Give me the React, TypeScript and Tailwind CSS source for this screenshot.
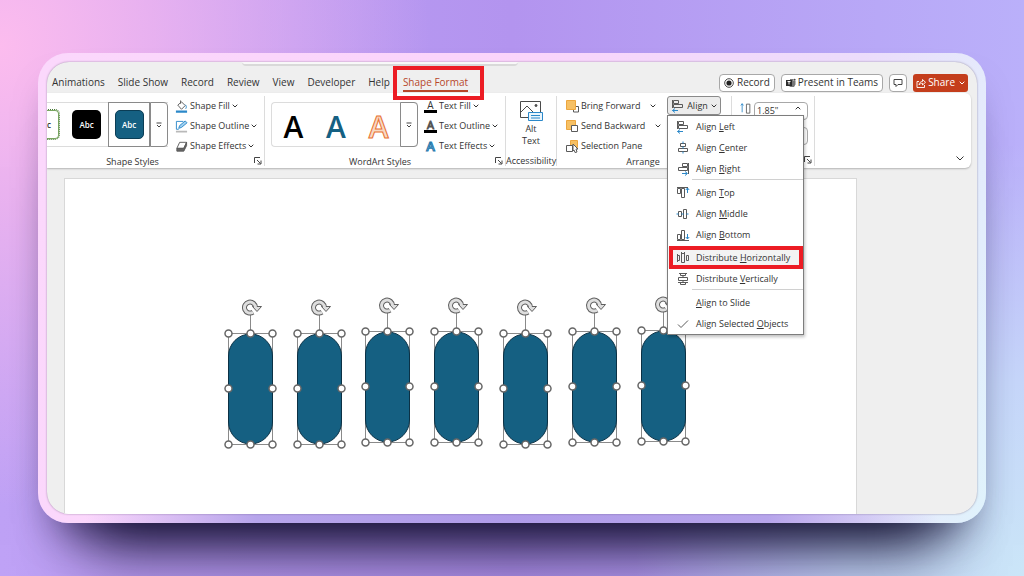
import type { ReactNode } from "react";
import clsx from "clsx";

const tabs = ["Animations", "Slide Show", "Record", "Review", "View", "Developer", "Help"];

// position of each selected shape on the slide
const shapes = [
	{ left: 164, top: 155 },
	{ left: 233, top: 155 },
	{ left: 301, top: 153 },
	{ left: 370, top: 153 },
	{ left: 439, top: 155 },
	{ left: 508, top: 153 },
	{ left: 577, top: 152 },
];

function Icon({ children, className }: { children: ReactNode; className?: string }) {
	return (
		<svg
			viewBox="0 0 14 14"
			className={clsx("shrink-0", className ?? "size-[14px]")}
			fill="none"
			stroke="#5a5a5a"
			aria-hidden="true"
		>
			{children}
		</svg>
	);
}

function Chevron({ className }: { className?: string }) {
	return (
		<svg viewBox="0 0 6 4" className={clsx("h-1 w-[6px] shrink-0", className)} fill="none" stroke="currentColor" aria-hidden="true">
			<path d="M.7.7 3 3 5.3.7" />
		</svg>
	);
}

function Launcher({ label }: { label: string }) {
	return (
		<button aria-label={label} className="ml-auto">
			<svg viewBox="0 0 8 8" className="size-2" fill="none" stroke="#444" aria-hidden="true">
				<path d="M.5 6V.5H6M3 3l3.5 3.5M7 3.5V7H3.5" />
			</svg>
		</button>
	);
}

function GalleryMore({ label }: { label: string }) {
	return (
		<button aria-label={label} className="flex w-[18px] items-center justify-center rounded-r border border-[#8a8a8a] text-[#444]">
			<svg viewBox="0 0 6 6" className="size-[6px]" fill="none" stroke="currentColor" aria-hidden="true">
				<path d="M.5 1h5M1 3l2 2 2-2" />
			</svg>
		</button>
	);
}

function Command({ icon, label, menu = true, spread }: { icon: ReactNode; label: string; menu?: boolean; spread?: boolean }) {
	return (
		<button className="flex h-5 items-center gap-[2px] whitespace-nowrap">
			{icon}
			<span>{label}</span>
			{menu && <Chevron className={spread ? "ml-2" : undefined} />}
		</button>
	);
}

const alignIcons = {
	left: (
		<Icon>
			<path d="M1.5 1v8M2.5 1.5h5v3h-5zM2.5 5.5h9v3h-9z" />
			<path d="M7 11.5H1.5M4 9.5l-2.5 2 2.5 2" stroke="#2b88c9" />
		</Icon>
	),
	center: (
		<Icon>
			<path d="M4.5 2.5h5v3h-5zM2.5 7.5h9v3h-9z" />
			<path d="M7 .5v2M7 5.5v2M7 10.5v2" stroke="#2b88c9" />
		</Icon>
	),
	right: (
		<Icon>
			<path d="M12.5 1v11M6.5 1.5h5v3h-5zM2.5 5.5h9v3h-9z" />
			<path d="M6 11.5h5M9 9.5l2.5 2-2.5 2" stroke="#2b88c9" />
		</Icon>
	),
	top: (
		<Icon>
			<path d="M1 1.5h11M1.5 2.5h3v5h-3zM5.5 2.5h3v9h-3z" />
			<path d="M11.5 7V2M9.8 4l1.7-2 1.7 2" stroke="#2b88c9" />
		</Icon>
	),
	middle: (
		<Icon>
			<path d="M2.5 4.5h3v5h-3zM7.5 2.5h3v9h-3z" />
			<path d="M.5 7h2M5.5 7h2M10.5 7h2" stroke="#2b88c9" />
		</Icon>
	),
	bottom: (
		<Icon>
			<path d="M1 12.5h12M1.5 6.5h3v5h-3zM5.5 2.5h3v9h-3z" />
			<path d="M11.5 6v5M9.8 9l1.7 2 1.7-2" stroke="#2b88c9" />
		</Icon>
	),
	horizontal: (
		<Icon>
			<path d="M1.5 3v8M1.5 4.5h2v5h-2M5.5 2.5h3v9h-3zM10.5 4.5h2v5h-2zM5.5 1v2M8.5 1v2" />
		</Icon>
	),
	vertical: (
		<Icon>
			<path d="M4.5 1.5h5v2h-5zM2.5 5.500h9v3h-9zM4.500 10.500h5v2h-5zM7 3.500v2M7 8.500v2M3 1.500h8M2 10.500h10" />
		</Icon>
	),
	check: (
		<Icon>
			<path d="m2 7.5 3 3 7-7" />
		</Icon>
	),
};

// `letter` is the access key, underlined inside the label
function MenuItem({
	icon,
	before = "",
	letter,
	after,
	marked,
}: {
	icon?: ReactNode;
	before?: string;
	letter: string;
	after: string;
	marked?: boolean;
}) {
	return (
		<button
			role="menuitem"
			className={clsx("relative flex h-[21px] w-full items-center pl-2 text-left whitespace-nowrap", marked && "mt-[2px] bg-[#f3f3f3]")}
		>
			<span className="flex w-5 shrink-0">{icon}</span>
			<span>
				{before}
				<span className="underline underline-offset-1">{letter}</span>
				{after}
			</span>
			{marked && <span className="absolute -inset-y-px right-0 left-px border-4 border-[#ec1c24]" />}
		</button>
	);
}

function AlignMenu() {
	return (
		<div
			role="menu"
			className="absolute top-full left-0 z-20 w-[137px] border border-[#7d7d7d] bg-white shadow-[1px_2px_3px_rgba(0,0,0,0.25)]"
		>
			<MenuItem icon={alignIcons.left} before="Align " letter="L" after="eft" />
			<MenuItem icon={alignIcons.center} before="Align " letter="C" after="enter" />
			<MenuItem icon={alignIcons.right} before="Align " letter="R" after="ight" />
			<div className="ml-6 border-t border-[#d0d0d0] pb-[2px]" />
			<MenuItem icon={alignIcons.top} before="Align " letter="T" after="op" />
			<MenuItem icon={alignIcons.middle} before="Align " letter="M" after="iddle" />
			<MenuItem icon={alignIcons.bottom} before="Align " letter="B" after="ottom" />
			<MenuItem icon={alignIcons.horizontal} before="Distribute " letter="H" after="orizontally" marked />
			<MenuItem icon={alignIcons.vertical} before="Distribute " letter="V" after="ertically" />
			<div className="ml-6 border-t border-[#d0d0d0] pb-[2px]" />
			<MenuItem letter="A" after="lign to Slide" />
			<MenuItem icon={alignIcons.check} before="Align Selected " letter="O" after="bjects" />
		</div>
	);
}

function TabBar() {
	return (
		<div className="pb-[2px]">
			<div className="ml-[195px] h-1 w-[276px] rounded-b border-b-2 border-[#d9d9d9] bg-[#f8f8f8]" />
			<div className="flex h-[25px] items-center justify-between pr-[9px] pl-[5px] text-[10px]">
				<nav className="flex items-center gap-[13px] pt-2 whitespace-nowrap">
					{tabs.map((tab) => (
						<button key={tab}>{tab}</button>
					))}
					<button className="relative text-[#b7472a]">
						<span className="block border-b-2 border-[#b7472a] leading-4">Shape Format</span>
						<span className="absolute -inset-y-2 -right-4 -left-[10px] z-10 border-4 border-[#ec1c24]" />
					</button>
				</nav>
				<div className="flex items-center gap-[6px] pt-2 whitespace-nowrap">
					<button className="flex h-[18px] items-center gap-[3px] rounded border border-[#a8a8a8] bg-white px-1">
						<svg viewBox="0 0 10 10" className="size-[10px]" aria-hidden="true">
							<circle cx="5" cy="5" r="4.3" fill="none" stroke="#333" strokeWidth=".9" />
							<circle cx="5" cy="5" r="2.6" fill="#222" />
						</svg>
						Record
					</button>
					<button className="flex h-[18px] items-center gap-[2px] rounded border border-[#a8a8a8] bg-white px-1">
						<svg viewBox="0 0 10 10" className="size-[10px]" aria-hidden="true">
							<path d="M4 1h3.500v2H9.500v3.500L8 9H4.500L3 8V3h1z" fill="#777" />
							<circle cx="8.600" cy="1.800" r="1" fill="#444" />
							<path d="M0 2h6v6H0z" fill="#2d2d2d" />
							<path d="M1.500 3.500h3M3 3.500v3" stroke="#fff" />
						</svg>
						Present in Teams
					</button>
					<button aria-label="Comments" className="flex h-[18px] w-[18px] items-center justify-center rounded border border-[#a8a8a8] bg-white">
						<svg viewBox="0 0 10 10" className="size-[10px]" fill="none" stroke="#444" aria-hidden="true">
							<path d="M1 1.5h8v5H5L3 8.5v-2H1z" />
						</svg>
					</button>
					<button className="flex h-[18px] items-center gap-[2px] rounded-[3px] bg-[#c43e1c] px-[3px] text-white">
						<svg viewBox="0 0 10 10" className="size-[10px]" fill="none" stroke="currentColor" aria-hidden="true">
							<path d="M3 3.500H1v6h7.500V7M3 7c.3-2.200 1.500-3.500 3.500-3.500V1.500l3 2.800-3 2.700V5.300C5 5.300 4 5.800 3 7z" strokeWidth=".9" />
						</svg>
						Share
						<Chevron className="ml-[2px]" />
					</button>
				</div>
			</div>
		</div>
	);
}

function Group({
	name,
	children,
	launcher,
	className,
	labelClass,
}: {
	name: string;
	children: ReactNode;
	launcher?: boolean;
	className?: string;
	labelClass?: string;
}) {
	return (
		<section className={clsx("mt-[3px] mb-[2px] flex shrink-0 flex-col border-r border-[#dcdcdc]", className)}>
			<div className="flex grow">{children}</div>
			<div className="flex h-3 items-center pr-[2px] leading-none">
				<span className={clsx("grow text-center whitespace-nowrap", labelClass)}>{name}</span>
				{launcher && <Launcher label={`${name} options`} />}
			</div>
		</section>
	);
}

function ShapeStyles() {
	return (
		<Group name="Shape Styles" launcher className="w-[218px]" labelClass="pr-9">
			<div className="mt-[6px] flex h-[45px] w-[121px] border-y border-[#dcdcdc] text-[8px] font-semibold">
				<button className="my-[7px] w-3 overflow-hidden rounded-r border border-l-0 border-[#78a560] text-left outline outline-dotted outline-[#4a7a38]">c</button>
				<button className="my-[7px] ml-[13px] h-[29px] w-[29px] rounded-[5px] bg-black text-white">Abc</button>
				<button className="-my-px ml-[7px] flex grow items-center justify-center border border-[#8a8a8a]">
					<span className="flex h-[29px] w-[29px] items-center justify-center rounded-[5px] border border-[#0b3d55] bg-[#156082] text-white">
						Abc
					</span>
				</button>
				<div className="-my-px flex">
					<GalleryMore label="More shape styles" />
				</div>
			</div>
			<div className="ml-[7px] flex flex-col">
				<Command
					label="Shape Fill"
					icon={
						<Icon className="size-[13px]">
							<path d="m3 5.5 4-3.500 4 4-4 4-4-4.500ZM6 4V.5" />
							<path d="M11 5c1.500 1.500 1.500 3 .5 4.500" stroke="#2b88c9" />
							<path d="M1 12.500h12" stroke="#2b88c9" strokeWidth="2.500" />
						</Icon>
					}
				/>
				<Command
					label="Shape Outline"
					icon={
						<Icon className="size-[13px]">
							<path d="M9 1.500H1.500V10H4" stroke="#2b88c9" />
							<path d="m4 9 1-3 6-5 2 2-6 5z" fill="#9fd0f0" stroke="#2b88c9" />
							<path d="M1 12.500h12" stroke="#b9b9b9" strokeWidth="2" />
						</Icon>
					}
				/>
				<Command
					label="Shape Effects"
					icon={
						<Icon className="size-[13px]">
							<path d="M5 2.500h7.500l-3 6.500H2z" />
							<path d="M2 9v3h7.500l3-6v-3.500L9.500 9H2z" fill="#666" />
						</Icon>
					}
				/>
			</div>
		</Group>
	);
}

function LetterIcon({ kind }: { kind: "fill" | "outline" | "effects" }) {
	return (
		<span className={clsx("flex w-[13px] justify-center leading-[10px]", kind !== "effects" && "border-b-[3px] border-black")}>
			<span
				className={clsx(
					kind === "fill" && "text-[10px]",
					kind === "outline" && "text-[11px] text-white [-webkit-text-stroke:1px_#555]",
					kind === "effects" && "text-[13px] font-semibold text-[#9fd0f0] [-webkit-text-stroke:1px_#1f78ac]"
				)}
			>
				A
			</span>
		</span>
	);
}

function WordArtStyles() {
	return (
		<Group name="WordArt Styles" launcher className="w-[241px]">
			<div className="mt-[6px] ml-[6px] flex h-[45px] w-[147px] rounded border border-r-0 border-[#dcdcdc] text-[30px] leading-none">
				<div className="flex grow items-center justify-around pt-1">
					<button className="font-semibold text-black">A</button>
					<button className="font-semibold text-[#156082]">A</button>
					<button className="font-semibold text-[#f7d9c4] [-webkit-text-stroke:1px_#e97132]">A</button>
				</div>
				<div className="-my-px flex">
					<GalleryMore label="More WordArt styles" />
				</div>
			</div>
			<div className="ml-[6px] flex flex-col">
				<Command label="Text Fill" icon={<LetterIcon kind="fill" />} />
				<Command label="Text Outline" icon={<LetterIcon kind="outline" />} />
				<Command label="Text Effects" icon={<LetterIcon kind="effects" />} />
			</div>
		</Group>
	);
}

function Accessibility() {
	return (
		<Group name="Accessibility" className="w-[51px]">
			<button className="flex grow flex-col items-center pt-1">
				<svg viewBox="0 0 24 22" className="h-[22px] w-6" fill="none" stroke="#4a4a4a" aria-hidden="true">
					<path d="M9 17.500H1.500v-16h20V12M2 12l6-6 7 7" />
					<circle cx="17" cy="5.500" r="1" fill="#4a4a4a" />
					<path d="M9.500 12.500h14v8h-14z" fill="#eaf5fc" stroke="#2b88c9" />
					<path d="M12 15.500h9M12 18h9" stroke="#2b88c9" />
				</svg>
				<span className="pt-px leading-3">
					Alt
					<br />
					Text
				</span>
			</button>
		</Group>
	);
}

function Arrange() {
	return (
		<Group name="Arrange" className="w-[175px]">
			<div className="ml-2 flex flex-col">
				<Command
					label="Bring Forward"
					spread
					icon={
						<Icon>
							<path d="M8.500 11v2h5V7.500H11" />
							<path d="M1.500 1.500h9v9h-9z" fill="#f6c064" stroke="#eda63e" />
						</Icon>
					}
				/>
				<Command
					label="Send Backward"
					spread
					icon={
						<Icon>
							<path d="M1.500 1.500h9v9h-9z" fill="#f6c064" stroke="#eda63e" />
							<path d="M6.500 6.500h6v6h-6z" fill="#fff" />
						</Icon>
					}
				/>
				<Command
					label="Selection Pane"
					menu={false}
					icon={
						<Icon>
							<path d="M5.500 1.500h7v7h-7z" fill="#f6c064" stroke="#eda63e" />
							<path d="M1.500 6.500h6v6h-6z" fill="#fff" />
							<path d="m8 5 5 5h-2l1 3-2 .5L9 11l-1 1z" fill="#fff" />
						</Icon>
					}
				/>
			</div>
			<div className="relative mr-[10px] ml-auto h-[19px]">
				<button
					aria-haspopup="menu"
					aria-expanded="true"
					className="flex h-[19px] w-[54px] items-center justify-center gap-[2px] rounded-[3px] border border-[#8a8a8a] bg-[#ececec]"
				>
					{alignIcons.left}
					Align
					<Chevron className="ml-px" />
				</button>
				<AlignMenu />
			</div>
		</Group>
	);
}

function SizeField({ label, value }: { label: string; value: string }) {
	return (
		<div className="flex items-start gap-[2px]">
			<Icon className="size-3">
				<path d="M7.500 2.500h4V13h-4z" />
				<path d="M2.500 12V2M1 4l1.500-2L4 4" stroke="#2b88c9" />
			</Icon>
			<div className="flex h-[18px] w-[54px] rounded border border-[#a8a8a8] bg-white">
				<input aria-label={label} defaultValue={value} className="w-10 min-w-0 pl-[2px] outline-none" />
				<Chevron className="mt-[3px] rotate-180" />
			</div>
		</div>
	);
}

function Ribbon() {
	return (
		<div className="relative mr-[6px] flex h-[75px] rounded-r-md bg-white shadow-[0_1px_2px_rgba(0,0,0,0.25)]">
			<ShapeStyles />
			<WordArtStyles />
			<Accessibility />
			<Arrange />
			<Group name="" launcher className="w-[83px]">
				<div className="ml-2 flex flex-col gap-[7px] pt-[6px]">
					<SizeField label="Shape Height" value={'1.85"'} />
					<SizeField label="Shape Width" value={'0.75"'} />
				</div>
			</Group>
			<button aria-label="Collapse ribbon" className="mt-auto mr-[7px] mb-[7px] ml-auto">
				<svg viewBox="0 0 8 5" className="h-[5px] w-2" fill="none" stroke="#333" aria-hidden="true">
					<path d="m.5.500 3.500 3.500L7.500.500" />
				</svg>
			</button>
		</div>
	);
}

const handles = [
	[6, 33],
	[28, 33],
	[50, 33],
	[6, 88],
	[50, 88],
	[6, 144],
	[28, 144],
	[50, 144],
];

const rotateArc = "M33.5 7.500A5.500 5.500 0 1 0 31 12.200";

function SelectedShape() {
	return (
		<svg
			viewBox="0 0 56 150"
			className="h-[150px] w-14 overflow-visible"
			fill="none"
			role="img"
			aria-label="Selected rounded rectangle"
		>
			<path d="M28.500 15v18M6.500 33.500h44v111h-44z" stroke="#8a8a8a" />
			<rect x="6.500" y="34" width="44" height="110" rx="22" fill="#156082" stroke="#0b3145" />
			<path d={rotateArc} stroke="#5f5f5f" strokeWidth="5" />
			<path d="M30.500 6.500h9l-4.500 5z" fill="#dedede" stroke="#5f5f5f" />
			<path d={rotateArc} stroke="#dedede" strokeWidth="3" />
			{handles.map(([x, y]) => (
				<circle key={`${x}-${y}`} cx={x + 0.5} cy={y + 0.5} r="3.500" fill="#fff" stroke="#666" strokeWidth="1.500" />
			))}
		</svg>
	);
}

export default function App() {
	return (
		<main className="flex min-h-screen flex-col overflow-hidden bg-[radial-gradient(ellipse_42%_80%_at_0%_8%,#fcbcee_0%,#f3b6efcc_35%,transparent_100%),radial-gradient(ellipse_38%_75%_at_100%_100%,#cbe6f8_0%,#c6d6fa_45%,transparent_100%),linear-gradient(90deg,#bfa2f6_0%,#b394ef_50%,#bab0fa_100%)] px-[38px] pt-[53px] pb-[53px] font-['Open_Sans','Noto_Sans',sans-serif] text-[9px] text-[#333]">
			<div className="flex grow flex-col rounded-[30px] bg-[radial-gradient(ellipse_45%_60%_at_50%_100%,#b09ce9_0%,#b7a5eb_60%,transparent_100%),linear-gradient(100deg,#fbd8fc_0%,#fbd4fb_45%,#ecdcfb_80%,#e0f3fc_100%)] p-[9px] shadow-[0_68px_60px_-46px_rgba(12,8,40,0.95),0_24px_40px_-20px_rgba(15,10,50,0.6)]">
				<div className="flex grow flex-col overflow-hidden rounded-[22px] bg-[#efefef] shadow-[0_0_2px_rgba(60,40,80,0.5)]">
					<TabBar />
					<Ribbon />
					<div className="flex grow pt-[10px] pr-[120px] pl-[17px]">
						<div className="relative grow border border-b-0 border-[#d8d8d8] bg-white">
							{shapes.map((shape) => (
								<div key={shape.left} className="absolute" style={{ left: shape.left - 7, top: shape.top - 34 }}>
									<SelectedShape />
								</div>
							))}
						</div>
					</div>
				</div>
			</div>
		</main>
	);
}
